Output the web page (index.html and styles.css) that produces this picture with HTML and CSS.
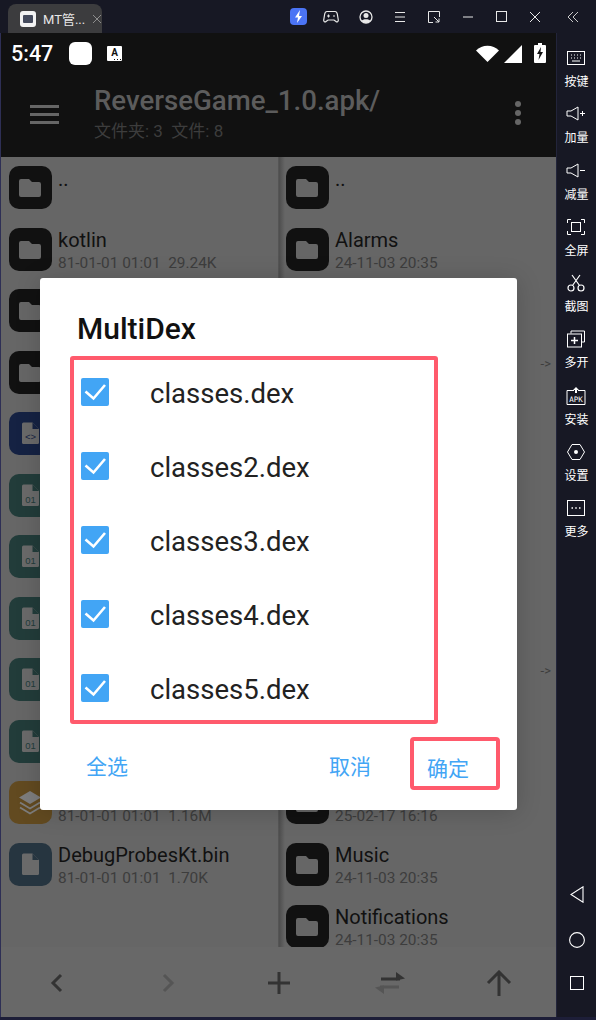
FILE: index.html
```html
<!DOCTYPE html>
<html lang="en">
<head>
	<meta charset="UTF-8">
	<title>MT</title>
	<link rel="stylesheet" href="styles.css">
</head>
<body>
<svg class="sprite" width="0" height="0">
	<symbol id="folder" viewBox="0 0 43 43"><path d="M12 13h8l3 3h7a2 2 0 0 1 2 2v11a2 2 0 0 1-2 2H12a2 2 0 0 1-2-2V15a2 2 0 0 1 2-2z" fill="#666"/></symbol>
	<symbol id="file" viewBox="0 0 43 43"><path d="M14.500 10.500h9l6.500 6.500v13.500a1.500 1.500 0 0 1-1.500 1.500h-14a1.500 1.500 0 0 1-1.500-1.500V12a1.500 1.500 0 0 1 1.500-1.500z" fill="#6a6a6a"/><path d="M23.500 10.500l6.500 6.500h-6.500z" fill="currentColor"/></symbol>
	<symbol id="tick" viewBox="0 0 28 28"><path d="M4.500 13.500l8 7L24 7" fill="none" stroke="#fff" stroke-width="2.600"/></symbol>
</svg>
<div class="window">
	<div class="titlebar">
		<div class="tab">
			<span class="tab-icon"><i></i></span>
			<span class="tab-name">MT管...</span>
			<svg class="tab-close" width="10" height="10" viewBox="0 0 10 10"><path d="M1 1l8 8M9 1l-8 8" stroke="#8d8d8d" fill="none"/></svg>
		</div>
		<div class="tab-more"><i></i><i></i><i></i></div>
		<div class="tools">
			<svg width="17" height="17" viewBox="0 0 17 17"><rect width="17" height="17" rx="4" fill="#4b74f5"/><path d="M10 2L5 9.500h3L7 15l5-7H9z" fill="#fff"/></svg>
			<svg width="16" height="14" viewBox="0 0 16 14"><path d="M4 1.500h8c1.500 0 2 1 2.300 2.500l1 6c.2 1.500-1.300 2.500-2.300 1.500L11 10H5l-2 1.500c-1 1-2.500 0-2.300-1.500l1-6C2 2.500 2.500 1.500 4 1.500z" fill="none" stroke="#e8e8e8" stroke-width="1.200"/><path d="M4 6h3M5.500 4.500v3M10 6h2" stroke="#e8e8e8" fill="none"/></svg>
			<svg width="14" height="14" viewBox="0 0 14 14"><circle cx="7" cy="7" r="6" fill="none" stroke="#e8e8e8" stroke-width="1.300"/><circle cx="7" cy="5.500" r="2.500" fill="#e8e8e8"/><path d="M2.500 11c1-2.500 8-2.500 9 0-2 2.500-7 2.500-9 0z" fill="#e8e8e8"/></svg>
			<svg width="12" height="12" viewBox="0 0 12 12"><path d="M1 1.500h10M1 6h10M1 10.500h10" stroke="#e8e8e8" fill="none"/></svg>
			<svg width="12" height="12" viewBox="0 0 12 12"><path d="M5 11.500H.5V.5h11V6M6 6l5 5M11 7.500V11H7.500" stroke="#e8e8e8" fill="none"/></svg>
			<svg width="12" height="12" viewBox="0 0 12 12"><path d="M1 6h10" stroke="#e8e8e8" fill="none"/></svg>
			<svg width="11" height="11" viewBox="0 0 11 11"><rect x=".5" y=".5" width="10" height="10" fill="none" stroke="#e8e8e8"/></svg>
			<svg width="12" height="12" viewBox="0 0 12 12"><path d="M1 1l10 10M11 1L1 11" stroke="#e8e8e8" fill="none"/></svg>
			<svg width="12" height="12" viewBox="0 0 12 12"><path d="M6 1L1 6l5 5M11 1L6 6l5 5" stroke="#c9c9c9" fill="none"/></svg>
		</div>
	</div>
	<div class="main">
		<div class="screen">
			<div class="top">
				<div class="status">
					<span class="clock">5:47</span>
					<span class="blank"></span>
					<span class="a-icon">A</span>
					<div class="status-right">
						<svg width="23" height="17" viewBox="0 0 23 17"><path d="M0 5.500C6 -1 17 -1 23 5.500L11.500 17z" fill="#fff"/></svg>
						<svg width="18" height="18" viewBox="0 0 18 18"><path d="M18 0v18H0z" fill="#fff"/></svg>
						<svg width="12" height="20" viewBox="0 0 12 20"><path d="M4 0h4v2h3a1 1 0 0 1 1 1v16a1 1 0 0 1-1 1H1a1 1 0 0 1-1-1V3a1 1 0 0 1 1-1h3z" fill="#fff"/><path d="M7 4L3 11h2.500L4.500 17 9 9H6.500z" fill="#111"/></svg>
					</div>
				</div>
				<div class="appbar">
					<div class="burger"><i></i><i></i><i></i></div>
					<div class="path">
						<div class="path-name">ReverseGame_1.0.apk/</div>
						<div class="path-info">文件夹: 3&nbsp; 文件: 8</div>
					</div>
					<div class="app-more"><i></i><i></i><i></i></div>
				</div>
			</div>
			<div class="panels">
				<div class="panel">
					<div class="row"><svg class="icon dark"><use href="#folder"/></svg><div class="info"><div class="up">..</div></div></div>
					<div class="row"><svg class="icon dark"><use href="#folder"/></svg><div class="info"><div class="name">kotlin</div><div class="meta">81-01-01 01:01&nbsp; 29.24K</div></div></div>
					<div class="row"><svg class="icon dark"><use href="#folder"/></svg></div>
					<div class="row"><svg class="icon dark"><use href="#folder"/></svg></div>
					<div class="row"><svg class="icon code" viewBox="0 0 43 43"><use href="#file" width="43" height="43"/><text class="glyph" x="21.500" y="28">&lt;&gt;</text></svg></div>
					<div class="row"><svg class="icon bin" viewBox="0 0 43 43"><use href="#file" width="43" height="43"/><text class="glyph" x="21.500" y="28.500">01</text></svg></div>
					<div class="row"><svg class="icon bin" viewBox="0 0 43 43"><use href="#file" width="43" height="43"/><text class="glyph" x="21.500" y="28.500">01</text></svg></div>
					<div class="row"><svg class="icon bin" viewBox="0 0 43 43"><use href="#file" width="43" height="43"/><text class="glyph" x="21.500" y="28.500">01</text></svg></div>
					<div class="row"><svg class="icon bin" viewBox="0 0 43 43"><use href="#file" width="43" height="43"/><text class="glyph" x="21.500" y="28.500">01</text></svg></div>
					<div class="row"><svg class="icon bin" viewBox="0 0 43 43"><use href="#file" width="43" height="43"/><text class="glyph" x="21.500" y="28.500">01</text></svg></div>
					<div class="row"><svg class="icon stack" viewBox="0 0 43 43"><path d="M21 10l11 6.500-11 6.500-11-6.500z" fill="#7d7d7d"/><path d="M11 21.500l10 6 10-6M11 26.500l10 6 10-6" fill="none" stroke="#7d7d7d" stroke-width="1.800"/></svg><div class="info info-low"><div class="meta">81-01-01 01:01&nbsp; 1.16M</div></div></div>
					<div class="row"><svg class="icon plain"><use href="#file"/></svg><div class="info"><div class="name">DebugProbesKt.bin</div><div class="meta">81-01-01 01:01&nbsp; 1.70K</div></div></div>
				</div>
				<div class="panel panel-right">
					<div class="row"><svg class="icon dark"><use href="#folder"/></svg><div class="info"><div class="up">..</div></div></div>
					<div class="row"><svg class="icon dark"><use href="#folder"/></svg><div class="info"><div class="name">Alarms</div><div class="meta">24-11-03 20:35</div></div></div>
					<div class="row"><svg class="icon dark"><use href="#folder"/></svg></div>
					<div class="row"><svg class="icon dark"><use href="#folder"/></svg><div class="arrow">-&gt;</div></div>
					<div class="row"><svg class="icon dark"><use href="#folder"/></svg></div>
					<div class="row"><svg class="icon dark"><use href="#folder"/></svg></div>
					<div class="row"><svg class="icon dark"><use href="#folder"/></svg></div>
					<div class="row"><svg class="icon dark"><use href="#folder"/></svg></div>
					<div class="row"><svg class="icon dark"><use href="#folder"/></svg><div class="arrow">-&gt;</div></div>
					<div class="row"><svg class="icon dark"><use href="#folder"/></svg></div>
					<div class="row"><svg class="icon dark"><use href="#folder"/></svg><div class="info info-low"><div class="meta">25-02-17 16:16</div></div></div>
					<div class="row"><svg class="icon dark"><use href="#folder"/></svg><div class="info"><div class="name">Music</div><div class="meta">24-11-03 20:35</div></div></div>
					<div class="row"><svg class="icon dark"><use href="#folder"/></svg><div class="info"><div class="name">Notifications</div><div class="meta">24-11-03 20:35</div></div></div>
				</div>
			</div>
			<div class="bottom">
				<svg width="16" height="20" viewBox="0 0 16 20"><path d="M12 2L4 10l8 8" fill="none" stroke="#333" stroke-width="3"/></svg>
				<svg width="16" height="20" viewBox="0 0 16 20"><path d="M4 2l8 8-8 8" fill="none" stroke="#555" stroke-width="3"/></svg>
				<svg width="22" height="22" viewBox="0 0 22 22"><path d="M0 11h22M11 0v22" fill="none" stroke="#333" stroke-width="3"/></svg>
				<svg width="30" height="22" viewBox="0 0 30 22"><path d="M6 7h19" stroke="#333" stroke-width="3" fill="none"/><path d="M21 0l9 6.500-9 2z" fill="#333"/><path d="M5 15h19" stroke="#555" stroke-width="3" fill="none"/><path d="M9 22L0 15.500l9-2z" fill="#555"/></svg>
				<svg class="up-arrow" width="26" height="26" viewBox="0 0 26 26"><path d="M13 26V3M2 13L13 2l11 11" fill="none" stroke="#333" stroke-width="3"/></svg>
			</div>
		</div>
		<div class="sidebar">
			<div class="side-item"><svg width="20" height="16" viewBox="0 0 20 16"><rect x="1.500" y="1.500" width="17" height="13" fill="none" stroke="#fff"/><path d="M5 5h1M8 5h1M11 5h1M14 5h1M5 8h1M8 8h1M11 8h1M14 8h1M6 11h8" stroke="#fff" fill="none"/></svg><span>按键</span></div>
			<div class="side-item"><svg width="20" height="16" viewBox="0 0 20 16"><path d="M1 5h4l7-4v13l-7-4H1z" fill="none" stroke="#fff"/><path d="M14 7.500h5M16.500 5v5" stroke="#fff" fill="none"/></svg><span>加量</span></div>
			<div class="side-item"><svg width="20" height="16" viewBox="0 0 20 16"><path d="M1 5h4l7-4v13l-7-4H1z" fill="none" stroke="#fff"/><path d="M14 7.500h5" stroke="#fff" fill="none"/></svg><span>减量</span></div>
			<div class="side-item"><svg width="18" height="16" viewBox="0 0 18 16"><path d="M.5 4V.5H4M14 .5h3.500V4M17.500 12v3.500H14M4 15.500H.5V12" stroke="#fff" fill="none"/><rect x="4.500" y="3.500" width="9" height="9" fill="none" stroke="#fff"/></svg><span>全屏</span></div>
			<div class="side-item"><svg width="18" height="18" viewBox="0 0 18 18"><circle cx="4" cy="14" r="3" fill="none" stroke="#fff" stroke-width="1.200"/><circle cx="14" cy="14" r="3" fill="none" stroke="#fff" stroke-width="1.200"/><path d="M5.500 11.500L13 1M12.500 11.500L5 1" stroke="#fff" stroke-width="1.200" fill="none"/></svg><span>截图</span></div>
			<div class="side-item"><svg width="18" height="17" viewBox="0 0 18 17"><path d="M4 3V.5h13.500v11H15" fill="none" stroke="#fff"/><rect x=".5" y="3.500" width="14" height="13" fill="none" stroke="#fff"/><path d="M7.500 6.500v7M4 10h7" stroke="#fff" stroke-width="1.500" fill="none"/></svg><span>多开</span></div>
			<div class="side-item"><svg width="20" height="18" viewBox="0 0 20 18"><path d="M8 3.500H1v14h18v-14h-7" fill="none" stroke="#fff"/><path d="M10 0l3 3h-2v3H9V3H7z" fill="#fff"/><text class="apk-text" x="10" y="14.500">APK</text></svg><span>安装</span></div>
			<div class="side-item"><svg width="18" height="16" viewBox="0 0 18 16"><path d="M5 .5h8L17.500 8 13 15.500H5L.5 8z" fill="none" stroke="#fff"/><circle cx="9" cy="8" r="2" fill="#fff"/></svg><span>设置</span></div>
			<div class="side-item"><svg width="18" height="16" viewBox="0 0 18 16"><rect x=".5" y=".5" width="17" height="15" fill="none" stroke="#fff"/><path d="M4.500 8h1.500M8.250 8h1.500M12 8h1.500" stroke="#fff" stroke-width="1.500" fill="none"/></svg><span>更多</span></div>
			<div class="nav">
				<svg width="14" height="17" viewBox="0 0 14 17"><path d="M13 .8v15.400L1 8.500z" fill="none" stroke="#fff" stroke-width="1.100"/></svg>
				<svg width="16" height="16" viewBox="0 0 16 16"><circle cx="8" cy="8" r="7.400" fill="none" stroke="#fff" stroke-width="1.100"/></svg>
				<svg width="14" height="14" viewBox="0 0 14 14"><rect x=".5" y=".5" width="13" height="13" fill="none" stroke="#fff"/></svg>
			</div>
		</div>
	</div>
</div>

<div class="dialog">
	<div class="dialog-title">MultiDex</div>
	<div class="dex-list">
		<div class="dex"><svg class="check"><use href="#tick"/></svg><span>classes.dex</span></div>
		<div class="dex"><svg class="check"><use href="#tick"/></svg><span>classes2.dex</span></div>
		<div class="dex"><svg class="check"><use href="#tick"/></svg><span>classes3.dex</span></div>
		<div class="dex"><svg class="check"><use href="#tick"/></svg><span>classes4.dex</span></div>
		<div class="dex"><svg class="check"><use href="#tick"/></svg><span>classes5.dex</span></div>
	</div>
	<div class="actions">
		<span class="btn btn-all">全选</span>
		<span class="btn btn-cancel">取消</span>
		<span class="btn btn-ok">确定</span>
	</div>
</div>
</body>
</html>
```

FILE: styles.css
```css
* {
	margin: 0;
	padding: 0;
	box-sizing: border-box;
}

body {
	width: 596px;
	height: 1020px;
	overflow: hidden;
	position: relative;
	background-color: #1d1e38;
	font-family: Roboto, "Noto Sans CJK SC", sans-serif;
}
.sprite {
	position: absolute;
}
.window {
	height: 1017px;
	display: flex;
	flex-direction: column;
	background-color: #171824;
}

/* title bar */
.titlebar {
	height: 33px;
	display: flex;
	align-items: flex-end;
	padding-left: 8px;
}
.tab {
	width: 101px;
	height: 29px;
	background-color: #3c3c3e;
	border-radius: 8px 8px 0 0;
	display: flex;
	align-items: center;
	padding-left: 12px;
}
.tab-icon {
	width: 16px;
	height: 16px;
	background-color: #f2f2f2;
	border-radius: 3px;
	display: flex;
	align-items: center;
	justify-content: center;
}
.tab-icon i {
	width: 10px;
	height: 8px;
	background-color: #444a5c;
	border-radius: 1px;
}
.tab-name {
	margin-left: 7px;
	font-size: 13px;
	color: #e6e6e6;
	white-space: nowrap;
}
.tab-close {
	margin-left: 7px;
	flex-shrink: 0;
}
.tab-more {
	width: 4px;
	height: 24px;
	margin-left: 13px;
	margin-bottom: 5px;
	display: flex;
	flex-direction: column;
	justify-content: center;
	gap: 3px;
}
.tab-more i {
	height: 4px;
	background-color: #b9b9b9;
}
.tools {
	height: 33px;
	margin-left: 174.500px;
	display: flex;
	align-items: center;
}
.tools svg {
	flex-shrink: 0;
	margin-right: 22px;
}
.tools svg:nth-child(1) { margin-right: 16.500px; }
.tools svg:nth-child(2) { margin-right: 20px; }
.tools svg:nth-child(3) { margin-right: 21px; }
.tools svg:nth-child(8) { margin-right: 26px; }

.main {
	flex: 1;
	display: flex;
	min-height: 0;
	border-left: 1px solid #2e2f55;
}
.screen {
	width: 555px;
	display: flex;
	flex-direction: column;
}

/* status + app bar */
.top {
	height: 124px;
	background-color: #111;
}
.status {
	height: 40px;
	display: flex;
	align-items: center;
	padding-left: 10px;
	padding-top: 1px;
}
.clock {
	font-size: 21.500px;
	font-weight: 500;
	color: #fff;
	width: 58px;
}
.blank {
	width: 23px;
	height: 23px;
	background-color: #fff;
	border-radius: 6px;
}
.a-icon {
	width: 15px;
	height: 15px;
	margin-left: 15px;
	background-color: #fff;
	color: #111;
	font-size: 10px;
	font-weight: 700;
	line-height: 13px;
	text-align: center;
	border-radius: 1px;
	position: relative;
}
.a-icon::after {
	content: "";
	position: absolute;
	right: 1px;
	bottom: 1px;
	width: 7px;
	height: 1px;
	background: repeating-linear-gradient(to right, #111 0 1px, #fff 1px 3px);
}
.status-right {
	margin-left: auto;
	margin-right: 10px;
	display: flex;
	align-items: center;
	gap: 5px;
}
.status-right svg:last-child {
	margin-left: 7px;
	margin-top: -1px;
}
.appbar {
	height: 84px;
	display: flex;
	align-items: center;
	padding-left: 29px;
	padding-bottom: 5px;
}
.burger {
	width: 29px;
	display: flex;
	flex-direction: column;
	gap: 5px;
	margin-top: 3px;
}
.burger i {
	height: 3px;
	background-color: #666;
}
.path {
	margin-left: 35px;
	margin-top: 4px;
}
.path-name {
	font-size: 27.600px;
	font-weight: 500;
	line-height: 32px;
	color: #5c5c5c;
	white-space: nowrap;
}
.path-info {
	margin-top: 1px;
	font-size: 17px;
	line-height: 26px;
	color: #3d3d3d;
	white-space: nowrap;
}
.app-more {
	margin-left: auto;
	margin-right: 35px;
	display: flex;
	flex-direction: column;
	gap: 3px;
	margin-top: 1px;
}
.app-more i {
	width: 6px;
	height: 6px;
	border-radius: 50%;
	background-color: #666;
}

/* file panels */
.panels {
	flex: 1;
	min-height: 0;
	display: flex;
	background-color: #666;
}
.panel {
	width: 277px;
	height: 790px;
	overflow: hidden;
	padding: 9px 0 0 8px;
}
.panel-right {
	width: 278px;
	padding-left: 7px;
	border-left: 1px solid #555;
	background: linear-gradient(to right, #4d4d4d, #666 6px);
}
.row {
	height: 61.550px;
	display: flex;
	position: relative;
}
.icon {
	width: 43px;
	height: 43px;
	border-radius: 10px;
	flex-shrink: 0;
	display: block;
}
.dark {
	background-color: #111;
}
.code {
	background-color: #152243;
	color: #152243;
}
.bin {
	background-color: #223c3a;
	color: #223c3a;
}
.stack {
	background-color: #624a20;
}
.plain {
	background-color: #263540;
	color: #263540;
}
.glyph {
	font-family: "Liberation Sans", sans-serif;
	font-size: 9.500px;
	text-anchor: middle;
	fill: currentColor;
}
.info {
	margin-left: 6px;
}
.info-low {
	padding-top: 24px;
}
.up {
	font-size: 20px;
	line-height: 26px;
	color: #111;
}
.name {
	font-size: 20px;
	line-height: 24px;
	color: #111;
	white-space: nowrap;
}
.meta {
	font-size: 15.400px;
	line-height: 23px;
	color: #3d3d3d;
	white-space: nowrap;
}
.arrow {
	position: absolute;
	right: 5px;
	top: 5px;
	font-size: 13px;
	color: #3d3d3d;
}

/* bottom toolbar */
.bottom {
	height: 70px;
	background-color: #686868;
	display: grid;
	grid-template-columns: repeat(5, 1fr);
	align-items: center;
	justify-items: center;
	padding-top: 2px;
}
.up-arrow {
	margin-right: 3px;
}

/* right sidebar */
.sidebar {
	width: 40px;
	background-color: #171824;
	border-left: 1px solid #22243a;
	display: flex;
	flex-direction: column;
	align-items: center;
	padding-top: 16px;
}
.side-item {
	height: 56.300px;
	display: flex;
	flex-direction: column;
	align-items: center;
}
.side-item svg {
	height: 18px;
	flex-shrink: 0;
}
.side-item span {
	font-family: "Noto Sans CJK SC", sans-serif;
	font-size: 12px;
	line-height: 16px;
	margin-top: 6px;
	color: #fff;
}
.apk-text {
	font-family: "DejaVu Sans Mono", monospace;
	font-size: 7.500px;
	text-anchor: middle;
	fill: #fff;
}
.nav {
	margin-top: auto;
	height: 131px;
	display: flex;
	flex-direction: column;
	align-items: center;
	justify-content: space-between;
	padding-bottom: 27px;
}

/* dialog over the list */
.dialog {
	position: absolute;
	left: 40px;
	top: 278px;
	width: 477px;
	height: 532px;
	background-color: #fff;
	border-radius: 3px;
	box-shadow: 0 2px 24px rgba(0, 0, 0, 0.18);
	padding: 30px 0 0 30px;
}
.dialog-title {
	font-size: 30px;
	font-weight: 500;
	line-height: 42px;
	margin-left: 7px;
	color: #111;
}
.dex-list {
	width: 368px;
	height: 368px;
	margin-top: 6px;
	border: 4.500px solid #ff5a6c;
	border-radius: 3px;
}
.dex {
	height: 74px;
	display: flex;
	align-items: flex-start;
	padding: 18px 0 0 7px;
	font-size: 27.500px;
	line-height: 32px;
	color: #222;
}
.check {
	width: 28px;
	height: 28px;
	margin-right: 41px;
	flex-shrink: 0;
	background-color: #42a5f5;
	border-radius: 2px;
}
.actions {
	height: 54px;
	margin-top: 13px;
	padding-top: 2px;
	display: flex;
	align-items: center;
	font-family: "Noto Sans CJK SC", sans-serif;
}
.btn {
	font-size: 21px;
	color: #42a5f5;
}
.btn-all {
	margin-left: 16px;
}
.btn-cancel {
	margin-left: 201px;
}
.btn-ok {
	align-self: flex-start;
	margin-top: -2px;
	width: 90px;
	height: 53px;
	margin-left: 39px;
	border: 4.500px solid #ff5a6c;
	border-radius: 4px;
	padding-left: 13px;
	line-height: 52px;
}
```
